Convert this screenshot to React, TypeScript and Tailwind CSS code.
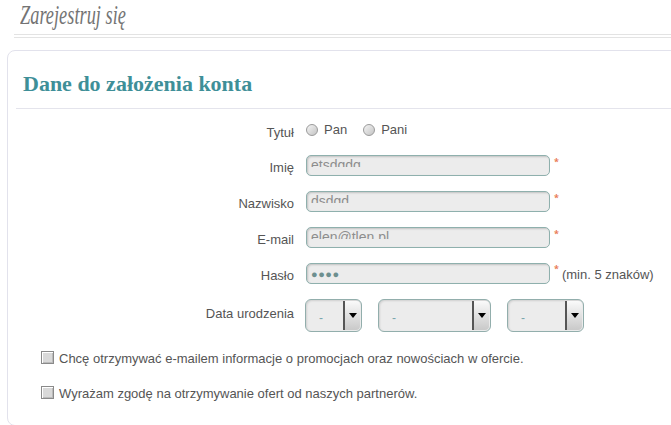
import React from 'react';

const labelCls =
  "w-[286px] shrink-0 text-right text-[13px] leading-[21px] text-[#555] font-['Liberation_Sans',Arial,sans-serif]";

const Req = () => (
  <span className="ml-[4px] self-start mt-[2px] text-[9px] leading-none font-bold text-[#e97b55]">*</span>
);

const TextField = ({ value, password }: { value: string; password?: boolean }) => (
  <div className="w-[244px] h-[21px] rounded-[5px] border border-[#8fb0ad] bg-[#ececec] shadow-[inset_1px_1px_2px_rgba(0,0,0,0.18)] pl-[4px] overflow-hidden">
    {password ? (
      <div className="pt-[3px] text-[11px] leading-[13px] tracking-[0.5px] text-[#6d8f8f]">●●●●</div>
    ) : (
      <div className="mt-[3px] h-[8px] overflow-hidden">
        <div className="text-[14px] leading-[13px] text-[#8e8e8e] font-['Liberation_Sans',Arial,sans-serif]">{value}</div>
      </div>
    )}
  </div>
);

const Select = ({ w }: { w: string }) => (
  <div className={`${w} h-[33px] rounded-[6px] border border-[#92aeac] bg-[#ececec] shadow-[inset_1px_1px_2px_rgba(0,0,0,0.12)] flex overflow-hidden`}>
    <div className="flex-1 pl-[13px] pt-[9px] text-[12px] text-[#7aa5ad] font-['Liberation_Sans',Arial,sans-serif]">-</div>
    <div className="w-[17px] my-[1px] mr-[1px] rounded-r-[4px] border-l-2 border-[#555] bg-gradient-to-b from-[#fafafa] to-[#c9c9c9] flex items-center justify-center">
      <svg width="8" height="5" viewBox="0 0 8 5">
        <path d="M0 0 H8 L4 5 Z" fill="#000" />
      </svg>
    </div>
  </div>
);

const Radio = ({ label }: { label: string }) => (
  <div className="flex items-center gap-[6px]">
    <span className="w-[12px] h-[12px] rounded-full border border-[#9a9a9a] bg-gradient-to-br from-[#f4f4f4] to-[#c4c4c4]" />
    <span className="text-[13px] text-[#555] font-['Liberation_Sans',Arial,sans-serif]">{label}</span>
  </div>
);

const Check = ({ label }: { label: string }) => (
  <div className="flex items-center gap-[5px] h-[14px]">
    <span className="w-[13px] h-[13px] border border-[#8a8a8a] bg-[#d9d9d9] shadow-[inset_1px_1px_0_#fff,inset_-1px_-1px_0_#bbb]" />
    <span className="text-[13px] leading-[14px] text-[#555] font-['Liberation_Sans',Arial,sans-serif] pt-[3px]">{label}</span>
  </div>
);

export default function App() {
  return (
    <div className="w-[671px] h-[425px] overflow-hidden bg-white">
      <div className="pl-[20px] h-[33px]">
        <h1 className="inline-block origin-left [transform:scaleX(0.68)] text-[27px] leading-[31px] italic text-[#747474] font-['Liberation_Serif',Georgia,serif] whitespace-nowrap">
          Zarejestruj się
        </h1>
      </div>
      <div className="ml-[14px] mt-[1px] h-[4px] border-y border-[#e3e3e3]" />
      <div className="ml-[7px] mt-[12px] w-[700px] h-[376px] rounded-[8px] border border-[#e2e2ec]">
        <div className="pl-[15px] pt-[19px] h-[57px]">
          <h2 className="text-[22px] leading-[28px] font-bold text-[#3e8f98] font-['Liberation_Serif',Georgia,serif]">
            Dane do założenia konta
          </h2>
        </div>
        <div className="ml-[8px] border-t border-[#e4e4ec]" />

        <div className="mt-[10px] flex flex-col gap-[15px]">
          <div className="flex items-center h-[21px]">
            <div className={`${labelCls} pt-[6px]`}>Tytuł</div>
            <div className="ml-[12px] flex items-center gap-[16px]">
              <Radio label="Pan" />
              <Radio label="Pani" />
            </div>
          </div>

          <div className="flex items-center h-[21px]">
            <div className={`${labelCls} pt-[4px]`}>Imię</div>
            <div className="ml-[12px] flex">
              <TextField value="etsdqdq" />
              <Req />
            </div>
          </div>

          <div className="flex items-center h-[21px]">
            <div className={`${labelCls} pt-[4px]`}>Nazwisko</div>
            <div className="ml-[12px] flex">
              <TextField value="dsdqd" />
              <Req />
            </div>
          </div>

          <div className="flex items-center h-[21px]">
            <div className={`${labelCls} pt-[4px]`}>E-mail</div>
            <div className="ml-[12px] flex">
              <TextField value="elen@tlen.pl" />
              <Req />
            </div>
          </div>

          <div className="flex items-center h-[21px]">
            <div className={`${labelCls} pt-[4px]`}>Hasło</div>
            <div className="ml-[12px] flex items-center">
              <TextField value="" password />
              <Req />
              <span className="ml-[3px] pt-[3px] text-[13px] text-[#555] font-['Liberation_Sans',Arial,sans-serif]">
                (min. 5 znaków)
              </span>
            </div>
          </div>

          <div className="flex items-center h-[33px]">
            <div className={`${labelCls} pb-[5px]`}>Data urodzenia</div>
            <div className="ml-[11px] flex gap-[16px]">
              <Select w="w-[57px]" />
              <Select w="w-[113px]" />
              <Select w="w-[77px]" />
            </div>
          </div>
        </div>

        <div className="mt-[18px] ml-[33px] flex flex-col gap-[21px]">
          <Check label="Chcę otrzymywać e-mailem informacje o promocjach oraz nowościach w ofercie." />
          <Check label="Wyrażam zgodę na otrzymywanie ofert od naszych partnerów." />
        </div>
      </div>
    </div>
  );
}
